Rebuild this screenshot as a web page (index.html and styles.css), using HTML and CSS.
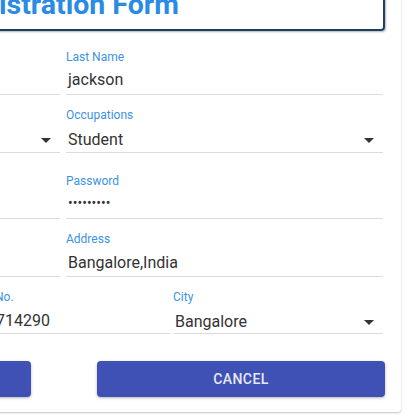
FILE: index.html
```html
<!DOCTYPE html>
<html lang="en">
<head>
<meta charset="utf-8">
<title>Registration Form</title>
<link rel="stylesheet" href="styles.css">
</head>
<body>
<div class="card">
  <div class="title-box"><h1 class="title">Registration Form</h1></div>
  <div class="row row-2 row-first">
    <div class="field"><label class="label">First Name</label><div class="value">michael</div></div>
    <div class="field"><label class="label">Last Name</label><div class="value">jackson</div></div>
  </div>
  <div class="row row-2 row-select">
    <div class="field select"><label class="label">Gender</label><div class="value"><span>Male</span><span class="arrow"></span></div></div>
    <div class="field select"><label class="label">Occupations</label><div class="value"><span>Student</span><span class="arrow"></span></div></div>
  </div>
  <div class="row row-2 row-pw">
    <div class="field"><label class="label">Email</label><div class="value">michael@gmail.com</div></div>
    <div class="field"><label class="label">Password</label><div class="value dots">•••••••••</div></div>
  </div>
  <div class="row row-2">
    <div class="field"><label class="label">Date of Birth</label><div class="value">12/08/1995</div></div>
    <div class="field"><label class="label">Address</label><div class="value">Bangalore,India</div></div>
  </div>
  <div class="row row-3 row-last">
    <div class="field"><label class="label">State</label><div class="value">Karnataka</div></div>
    <div class="field"><label class="label">Phone No.</label><div class="value">9876714290</div></div>
    <div class="field select"><label class="label">City</label><div class="value"><span>Bangalore</span><span class="arrow"></span></div></div>
  </div>
  <div class="actions">
    <button class="btn">SUBMIT</button>
    <button class="btn">CANCEL</button>
  </div>
</div>
</body>
</html>
```

FILE: styles.css
```css
html, body {
  margin: 0;
  padding: 0;
  background: #ffffff;
  overflow: hidden;
  width: 416px;
  height: 416px;
}

body {
  font-family: Roboto, "Liberation Sans", sans-serif;
  color: #333333;
}

.card {
  box-sizing: border-box;
  width: 674px;
  margin: -38px 0 0 -273px;
  padding: 16px 16px 15px 16px;
  background: #ffffff;
  border-radius: 3px;
  box-shadow: 0 1px 2px rgba(0, 0, 0, 0.22), 0 0 1px rgba(0, 0, 0, 0.12);
}

.title-box {
  border: 2px solid #1e4060;
  border-radius: 4px;
  padding: 8px;
  box-shadow: 1px 1px 2px rgba(0, 0, 0, 0.3);
  text-align: center;
}

.title {
  margin: 0;
  font-size: 28.5px;
  line-height: 33px;
  font-weight: 700;
  color: #2a8be4;
}

.row {
  display: grid;
  width: 640px;
  margin-top: 13px;
}

.row-2 {
  grid-template-columns: 317px 317px;
  column-gap: 6px;
}

.row-3 {
  grid-template-columns: 212px 212px 210px;
  column-gap: 3px;
}

.field {
  display: flex;
  flex-direction: column;
  border-bottom: 1px solid #dcdcdc;
}

.label {
  font-size: 12px;
  line-height: 14px;
  color: #3b93e2;
  margin-bottom: 7px;
}

.value {
  font-size: 16px;
  line-height: 20px;
  padding: 0 0 3px 2px;
  color: #333333;
  white-space: nowrap;
}

/* row 1 */
.row-first {
  margin-top: 19px;
}

.row-first .label {
  margin-bottom: 6px;
}

.row-first .value {
  padding-bottom: 4px;
}

/* select row */
.row-select .label {
  margin-bottom: 8px;
}

.row-select .value {
  padding-bottom: 2px;
}

/* password row */
.row-pw {
  margin-top: 21px;
}

.row-pw .label {
  margin-bottom: 5px;
}

.row-pw .value {
  padding-bottom: 5px;
}

/* last row */
.row-last .value {
  padding-bottom: 2px;
}

.row-last .select .value {
  padding-top: 1px;
  padding-bottom: 1px;
}

.select .value {
  display: flex;
  align-items: center;
  justify-content: space-between;
  padding-right: 9px;
}

.arrow {
  width: 0;
  height: 0;
  border-left: 5px solid transparent;
  border-right: 5px solid transparent;
  border-top: 5px solid #333333;
}

.dots {
  font-size: 14px;
  letter-spacing: 0;
}

.actions {
  display: flex;
  gap: 66px;
  margin-top: 27px;
}

.btn {
  flex: 1;
  height: 36px;
  border: none;
  border-radius: 4px;
  background: #3f51b5;
  color: #e6e8f5;
  font-family: Roboto, "Liberation Sans", sans-serif;
  font-size: 14px;
  font-weight: 500;
  letter-spacing: 0.4px;
  box-shadow: 0 1px 3px rgba(0, 0, 0, 0.3);
}
```
